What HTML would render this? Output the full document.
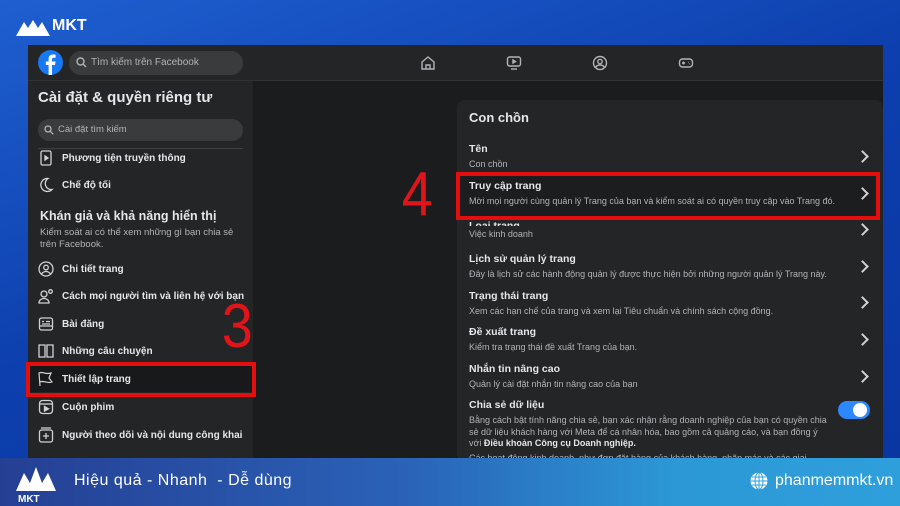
<!DOCTYPE html>
<html><head><meta charset="utf-8"><style>
*{margin:0;padding:0;box-sizing:border-box}
body{width:900px;height:506px;overflow:hidden;position:relative;font-family:"Liberation Sans",sans-serif;background:linear-gradient(160deg,#1f5fd0 0%,#0d3fae 45%,#0a35a0 100%);color:#e4e6eb}
.abs{position:absolute}
.win{left:28px;top:45px;width:855px;height:415px;background:#1b1c1d}
.top{left:28px;top:45px;width:855px;height:36px;background:#242526;border-bottom:1px solid #333}
.left{left:28px;top:81px;width:225px;height:379px;background:#242526}
.card{left:457px;top:100px;width:426px;height:360px;background:#242526;border-radius:8px 8px 0 0}
.it{position:absolute;left:62px;font-size:10px;font-weight:bold;color:#e4e6eb}
.ic{position:absolute;left:38px;width:16px;height:16px}
.row{position:absolute;left:469px;width:400px}
.row b{display:block;font-size:10.5px;color:#e4e6eb}
.row span{display:block;font-size:9px;color:#b0b3b8;margin-top:4px}
.chev{position:absolute;left:858px;width:9px;height:9px;border-top:2px solid #d0d2d6;border-right:2px solid #d0d2d6;transform:rotate(45deg)}
.red{position:absolute;border:4px solid #e50e0e}
.num{position:absolute;color:#e0141a;font-family:"Liberation Sans",sans-serif;font-size:62px;line-height:1;transform:scaleX(.9)}
.ban{left:0;top:458px;width:900px;height:48px;background:linear-gradient(90deg,#253f93 0%,#2a62b8 45%,#2c98d6 75%,#2f9fdc 100%)}
</style></head><body>
<div class="abs" style="left:16px;top:18px;width:34px;height:18px">
<svg width="34" height="18"><path d="M0 18 L8 4 L12 10 L17 2 L22 10 L26 4 L34 18Z" fill="#fff"/></svg></div>
<div class="abs" style="left:52px;top:17px;font-size:16px;font-weight:bold;color:#fff">MKT</div>
<div class="abs win"></div>
<div class="abs top"></div>
<svg class="abs" style="left:38px;top:50px" width="25" height="25"><circle cx="12.5" cy="12.5" r="12.5" fill="#1877f2"/><path d="M14 25V15h3l.5-3.5H14V9.5c0-1 .4-1.7 1.8-1.7h1.8V4.7c-.4 0-1.5-.2-2.7-.2-2.700 0-4.300 1.600-4.300 4.500v2.500H7.800V15h2.800v10z" fill="#fff"/></svg>
<div class="abs" style="left:69px;top:51px;width:174px;height:24px;border-radius:12px;background:#3a3b3c;font-size:10px;color:#b0b3b8;padding:6px 0 0 22px">Tìm kiếm trên Facebook</div>
<svg class="abs" style="left:76px;top:57px" width="11" height="11"><circle cx="4.500" cy="4.500" r="3.500" stroke="#b0b3b8" stroke-width="1.400" fill="none"/><path d="M7 7l3 3" stroke="#b0b3b8" stroke-width="1.400"/></svg>
<svg class="abs" style="left:420px;top:55px" width="16" height="16" fill="none" stroke="#b0b3b8" stroke-width="1.400"><path d="M2 7l6-5 6 5v7H2z M6 14v-4h4v4"/></svg>
<svg class="abs" style="left:506px;top:55px" width="16" height="16" fill="none" stroke="#b0b3b8" stroke-width="1.400"><rect x="1.500" y="2" width="13" height="9" rx="2"/><path d="M5 14h6"/><path d="M7 5v3l2.500-1.500z" fill="#b0b3b8"/></svg>
<svg class="abs" style="left:592px;top:55px" width="16" height="16" fill="none" stroke="#b0b3b8" stroke-width="1.400"><circle cx="8" cy="8" r="6.500"/><circle cx="8" cy="6.500" r="2.200"/><path d="M3.500 12.500c1-2 3-2.500 4.500-2.500s3.500.5 4.500 2.500"/></svg>
<svg class="abs" style="left:678px;top:55px" width="16" height="16" fill="none" stroke="#b0b3b8" stroke-width="1.400"><rect x="1.500" y="4" width="13" height="8" rx="3"/><path d="M4 8h3M5.500 6.500v3M10 7.500h.5M11 9h.5"/></svg>
<div class="abs left"></div>
<div class="abs" style="left:38px;top:89px;font-size:15px;font-weight:bold;color:#e4e6eb">Cài đặt &amp; quyền riêng tư</div>
<div class="abs" style="left:38px;top:119px;width:205px;height:22px;border-radius:11px;background:#3a3b3c;font-size:9.5px;color:#b0b3b8;padding:5px 0 0 20px">Cài đặt tìm kiếm</div>
<svg class="abs" style="left:44px;top:125px" width="10" height="10"><circle cx="4" cy="4" r="3" stroke="#b0b3b8" stroke-width="1.300" fill="none"/><path d="M6.300 6.300l3 3" stroke="#b0b3b8" stroke-width="1.300"/></svg>
<div class="abs" style="left:38px;top:148px;width:205px;height:1px;background:#3e4042"></div>
<svg class="ic" style="top:150px" viewBox="0 0 16 16" fill="none" stroke="#d0d2d6" stroke-width="1.300"><rect x="3" y="1" width="10" height="14" rx="1.500"/><path d="M7 6v4l3-2z" fill="#d0d2d6"/></svg>
<div class="it" style="top:153px">Phương tiện truyền thông</div>
<svg class="ic" style="top:177px" viewBox="0 0 16 16" fill="none" stroke="#d0d2d6" stroke-width="1.300"><path d="M10 1.500a6.500 6.500 0 1 0 4 11A6 6 0 0 1 10 1.500z"/></svg>
<div class="it" style="top:180px">Chế độ tối</div>
<div class="abs" style="left:40px;top:209px;font-size:12.5px;font-weight:bold;color:#e4e6eb">Khán giả và khả năng hiển thị</div>
<div class="abs" style="left:40px;top:227px;width:210px;font-size:9.5px;line-height:12px;color:#b0b3b8">Kiểm soát ai có thể xem những gì bạn chia sẻ trên Facebook.</div>
<svg class="ic" style="top:261px" viewBox="0 0 16 16" fill="none" stroke="#d0d2d6" stroke-width="1.300"><circle cx="8" cy="8" r="7"/><circle cx="8" cy="6.500" r="2.300"/><path d="M3.500 13c1.500-2 3-2.500 4.500-2.500s3 .5 4.500 2.500"/></svg>
<div class="it" style="top:264px">Chi tiết trang</div>
<svg class="ic" style="top:288px" viewBox="0 0 16 16" fill="none" stroke="#d0d2d6" stroke-width="1.300"><circle cx="6" cy="6" r="3"/><path d="M1 15c0-3 2.500-4.500 5-4.500s5 1.500 5 4.500z"/><circle cx="12.500" cy="3.500" r="1.800"/></svg>
<div class="it" style="top:291px">Cách mọi người tìm và liên hệ với bạn</div>
<svg class="ic" style="top:316px" viewBox="0 0 16 16" fill="none" stroke="#d0d2d6" stroke-width="1.300"><rect x="1.500" y="2" width="13" height="12" rx="2"/><path d="M4 5.500h2M8 5.500h4M4 8h8M1.500 10h13"/></svg>
<div class="it" style="top:319px">Bài đăng</div>
<svg class="ic" style="top:343px" viewBox="0 0 16 16" fill="none" stroke="#d0d2d6" stroke-width="1.300"><path d="M1 2h6v12H1zM9 2h6v12H9z"/></svg>
<div class="it" style="top:346px">Những câu chuyện</div>
<div class="abs" style="left:30px;top:364px;width:222px;height:28px;background:#18191a"></div>
<div class="red" style="left:26px;top:362px;width:230px;height:35px"></div>
<svg class="ic" style="top:371px" viewBox="0 0 16 16" fill="none" stroke="#d0d2d6" stroke-width="1.200"><path d="M2 15L1 2c4-2 6 2 12 0l-2 5 3 4c-5 2-8-2-12 0"/></svg>
<div class="it" style="top:374px">Thiết lập trang</div>
<svg class="ic" style="top:399px" viewBox="0 0 16 16" fill="none" stroke="#d0d2d6" stroke-width="1.300"><rect x="1.500" y="1.500" width="13" height="13" rx="3"/><path d="M1.500 5h13"/><path d="M6.500 7.500v4.500l4-2.200z" fill="#d0d2d6"/></svg>
<div class="it" style="top:402px">Cuộn phim</div>
<svg class="ic" style="top:427px" viewBox="0 0 16 16" fill="none" stroke="#d0d2d6" stroke-width="1.300"><rect x="1.500" y="3" width="13" height="12" rx="2"/><path d="M3 1h10M8 6v6M5 9h6"/></svg>
<div class="it" style="top:430px">Người theo dõi và nội dung công khai</div>
<div class="num" style="left:220px;top:296px">3</div>
<div class="abs card"></div>
<div class="abs" style="left:469px;top:110px;font-size:13px;font-weight:bold;color:#e4e6eb">Con chồn</div>
<div class="row" style="top:143px"><b>Tên</b><span>Con chồn</span></div><div class="chev" style="top:152px"></div>
<div class="abs" style="left:460px;top:176px;width:416px;height:40px;background:#1c1d1e"></div>
<div class="red" style="left:456px;top:172px;width:424px;height:48px"></div>
<div class="row" style="top:180px"><b>Truy cập trang</b><span>Mời mọi người cùng quản lý Trang của bạn và kiểm soát ai có quyền truy cập vào Trang đó.</span></div><div class="chev" style="top:189px"></div>
<div class="row" style="top:220px"><b style="height:6px;overflow:hidden">Loại trang</b><span style="margin-top:3px">Việc kinh doanh</span></div><div class="chev" style="top:225px"></div>
<div class="row" style="top:253px"><b>Lịch sử quản lý trang</b><span>Đây là lịch sử các hành động quản lý được thực hiện bởi những người quản lý Trang này.</span></div><div class="chev" style="top:262px"></div>
<div class="row" style="top:290px"><b>Trạng thái trang</b><span>Xem các hạn chế của trang và xem lại Tiêu chuẩn và chính sách cộng đồng.</span></div><div class="chev" style="top:298px"></div>
<div class="row" style="top:326px"><b>Đề xuất trang</b><span>Kiểm tra trạng thái đề xuất Trang của bạn.</span></div><div class="chev" style="top:335px"></div>
<div class="row" style="top:363px"><b>Nhắn tin nâng cao</b><span>Quản lý cài đặt nhắn tin nâng cao của bạn</span></div><div class="chev" style="top:372px"></div>
<div class="row" style="top:399px;width:360px"><b>Chia sẻ dữ liệu</b><span style="line-height:11.5px">Bằng cách bật tính năng chia sẻ, bạn xác nhận rằng doanh nghiệp của bạn có quyền chia sẻ dữ liệu khách hàng với Meta để cá nhân hóa, bao gồm cả quảng cáo, và bạn đồng ý với <b style="display:inline;font-size:9px">Điều khoản Công cụ Doanh nghiệp.</b></span><span style="margin-top:3px">Các hoạt động kinh doanh, như đơn đặt hàng của khách hàng, nhãn mác và các giai đoạn</span></div>
<div class="abs" style="left:838px;top:401px;width:32px;height:18px;border-radius:9px;background:#2d88ff"></div>
<div class="abs" style="left:853px;top:403px;width:14px;height:14px;border-radius:7px;background:#fff"></div>
<div class="num" style="left:400px;top:164px">4</div>
<div class="abs ban"></div>
<svg class="abs" style="left:14px;top:461px" width="44" height="42"><path d="M2 30 L10 12 L16 22 L22 6 L28 22 L34 12 L42 30Z" fill="#fff"/><text x="4" y="41" font-size="10" font-weight="bold" fill="#fff" font-family="Liberation Sans">MKT</text></svg>
<div class="abs" style="left:74px;top:472px;font-size:16px;color:#fff;letter-spacing:.5px">Hiệu quả - Nhanh&nbsp; - Dễ dùng</div>
<svg class="abs" style="left:750px;top:472px" width="18" height="18"><circle cx="9" cy="9" r="8.500" fill="#fff"/><path d="M0.500 9h17M9 .5v17M2 5h14M2 13h14" stroke="#2f9fdc" stroke-width="1"/><ellipse cx="9" cy="9" rx="4" ry="8.500" fill="none" stroke="#2f9fdc" stroke-width="1"/></svg>
<div class="abs" style="left:775px;top:472px;font-size:16px;color:#fff">phanmemmkt.vn</div>
</body></html>
